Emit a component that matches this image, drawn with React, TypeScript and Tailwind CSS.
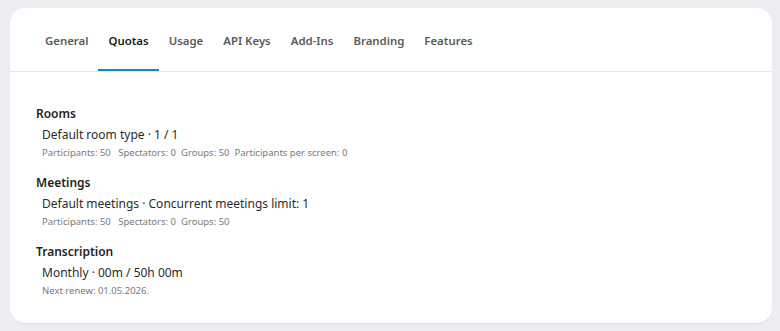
import React from "react";

const tabs = ["General", "Quotas", "Usage", "API Keys", "Add-Ins", "Branding", "Features"];

function Section({ title, item, sub }: { title: string; item: string; sub: React.ReactNode }) {
  return (
    <div className="flex flex-col">
      <div className="text-[12px] font-semibold text-[#1f1f1f] leading-[18px]">{title}</div>
      <div className="pl-[6px] mt-[3px] text-[12px] text-[#2b2b2b] leading-[18px]">{item}</div>
      <div className="pl-[6px] mt-[2px] text-[9.5px] text-[#7a7a7a] leading-[14px]">{sub}</div>
    </div>
  );
}

export default function App() {
  return (
    <div className="w-[780px] h-[331px] bg-[#eceef2] pt-[8px] pl-[10px] pr-[8px]" style={{ fontFamily: '"Noto Sans", sans-serif' }}>
      <div className="bg-white rounded-[15px] h-[315px] shadow-[0_1px_2px_rgba(0,0,0,0.06)] overflow-hidden">
        <div className="h-[64px] border-b border-[#e6e6e6] flex items-end pl-[25px]">
          {tabs.map((t) => (
            <div
              key={t}
              className={
                "h-[63px] px-[10px] flex items-center text-[11.4px] font-semibold border-b-2 " +
                (t === "Quotas" ? "text-[#1a1a1a] border-[#1d7fd6]" : "text-[#5a5a5a] border-transparent")
              }
            >
              <span className="mt-[4px]">{t}</span>
            </div>
          ))}
        </div>
        <div className="pl-[26px] pt-[33px] flex flex-col gap-[14px]">
          <Section
            title="Rooms"
            item="Default room type · 1 / 1"
            sub={
              <>
                Participants: 50&nbsp;&nbsp; Spectators: 0&nbsp;&nbsp;Groups: 50&nbsp;&nbsp;Participants per screen: 0
              </>
            }
          />
          <Section
            title="Meetings"
            item="Default meetings · Concurrent meetings limit: 1"
            sub={<>Participants: 50&nbsp;&nbsp; Spectators: 0&nbsp;&nbsp;Groups: 50</>}
          />
          <Section title="Transcription" item="Monthly · 00m / 50h 00m" sub="Next renew: 01.05.2026." />
        </div>
      </div>
    </div>
  );
}
